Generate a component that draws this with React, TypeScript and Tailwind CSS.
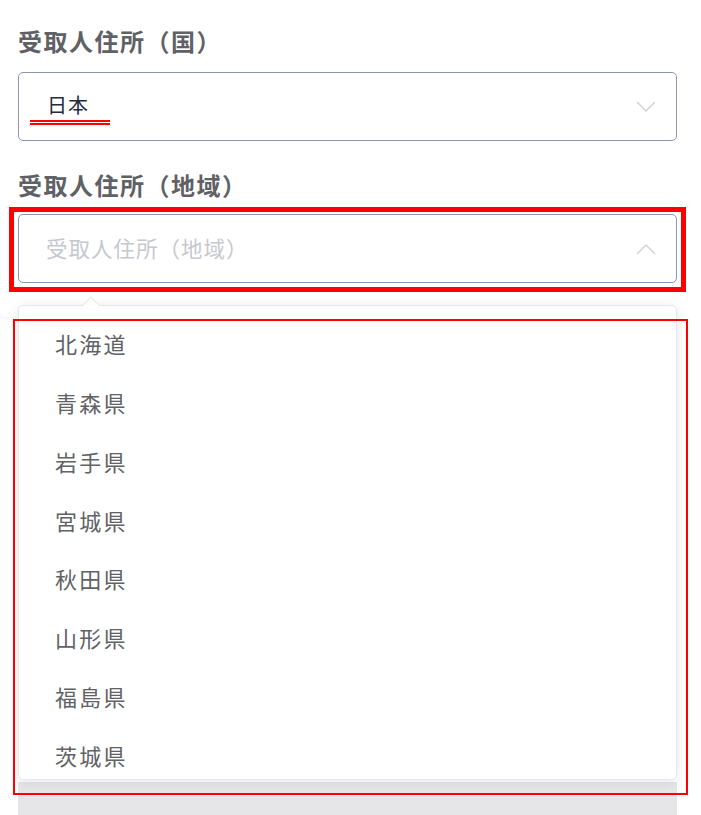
import React from "react";

const items = ["北海道", "青森県", "岩手県", "宮城県", "秋田県", "山形県", "福島県", "茨城県"];

function Chevron({ up }: { up?: boolean }) {
  return (
    <svg width="20" height="12" viewBox="0 0 20 12" fill="none" className="shrink-0">
      <path
        d={up ? "M1.5 10.5 L10 2 L18.5 10.5" : "M1.5 1.5 L10 10 L18.5 1.5"}
        stroke="#cdd0d6"
        strokeWidth="1.4"
        strokeLinecap="round"
        strokeLinejoin="round"
      />
    </svg>
  );
}

export default function App() {
  return (
    <div className="relative w-[701px] h-[815px] overflow-hidden bg-white font-['Noto_Sans_CJK_JP','Noto_Sans',sans-serif]">
      <div className="pl-[18px] pr-[24px] pt-[26px] flex flex-col">
        <div className="h-[30px] leading-[30px] text-[24px] font-bold text-[#5f6166] tracking-[1.5px]">
          受取人住所（国）
        </div>
        <div className="mt-[16px] h-[69px] border border-[#8e95b3] rounded-[5px] flex items-center justify-between pl-[28px] pr-[20px]">
          <span className="text-[20px] text-[#262b3d] pb-[4px] tracking-[1px]">日本</span>
          <Chevron />
        </div>
        <div className="mt-[29px] h-[30px] leading-[30px] text-[24px] font-bold text-[#5f6166] tracking-[1.5px]">
          受取人住所（地域）
        </div>
        <div className="mt-[14px] h-[69px] border border-[#8e95b3] rounded-[5px] flex items-center justify-between pl-[27px] pr-[20px]">
          <span className="text-[21.5px] text-[#c6c8ce] tracking-[1px]">受取人住所（地域）</span>
          <Chevron up />
        </div>
        <div className="relative mt-[22px] h-[475px] rounded-[5px] border border-[#e4e7ed] bg-white shadow-[0_2px_12px_0_rgba(0,0,0,0.1)]">
          <div className="absolute left-[66px] top-[-7px] w-[12px] h-[12px] rotate-45 bg-white border-l border-t border-[#e4e7ed]" />
          <div className="h-full overflow-hidden rounded-[5px] pt-[8px]">
            {items.map((t) => (
              <div
                key={t}
                className="h-[58.86px] flex items-center pl-[36px] text-[22px] text-[#606266] tracking-[2.3px]"
              >
                {t}
              </div>
            ))}
          </div>
        </div>
        <div className="mt-[2px] h-[60px] bg-[#e6e6e9]" />
      </div>

      {/* annotations */}
      <div className="absolute left-[30px] top-[120px] w-[80px] h-[5px] border-y-2 border-[#ff0000]" />
      <div className="absolute left-[9px] top-[207px] w-[677px] h-[85px] border-[5px] border-[#ff0000]" />
      <div className="absolute left-[13px] top-[319px] w-[675px] h-[476px] border-2 border-[#ff0000]" />
    </div>
  );
}
